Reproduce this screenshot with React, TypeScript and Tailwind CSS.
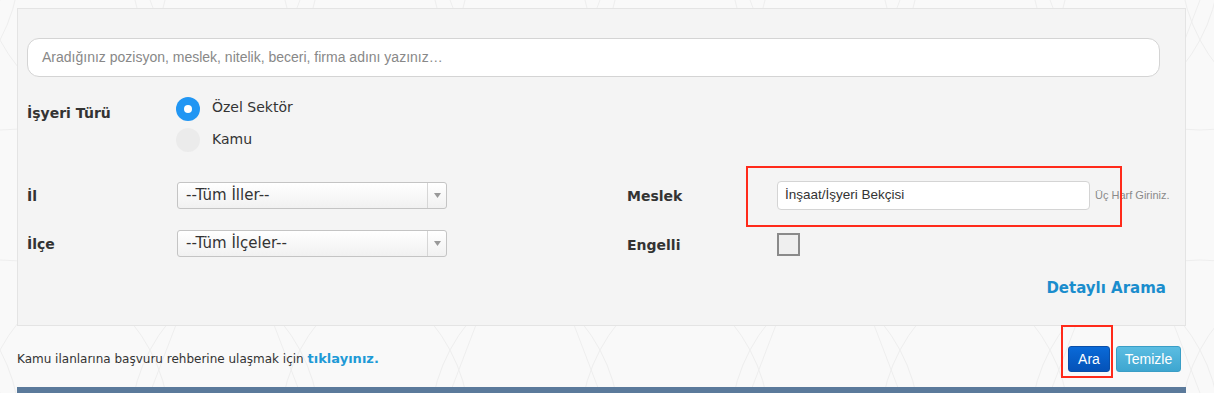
import React from "react";

const verdana = "font-['DejaVu_Sans',Verdana,sans-serif]";
const helv = "font-['Liberation_Sans',Arial,sans-serif]";

function Select({ value }: { value: string }) {
  return (
    <div className="flex h-[27px] w-[270px] shrink-0 items-stretch overflow-hidden rounded-[3px] border border-[#c4c4c4] bg-gradient-to-b from-white to-[#f1f1f1]">
      <div className={`flex flex-1 items-center pl-[8px] text-[15px] leading-none text-[#333] ${verdana}`}>{value}</div>
      <div className="flex w-[19px] items-center justify-center border-l border-[#d6d6d6]">
        <svg width="7" height="5" viewBox="0 0 7 5">
          <path d="M0 0h7L3.5 5z" fill="#999" />
        </svg>
      </div>
    </div>
  );
}

function Pattern() {
  const xs = [-150, 150, 450, 750, 1050, 1350];
  return (
    <svg className="absolute inset-0" width="1214" height="393">
      <g fill="none" stroke="#eeeeee" strokeWidth="1">
        {xs.map((x) => (
          <g key={x}>
            <circle cx={x} cy={-40} r={170} />
            <circle cx={x + 150} cy={-40} r={170} />
            <circle cx={x} cy={430} r={170} />
            <circle cx={x + 150} cy={430} r={170} />
            <path d={`M${x} 0 L${x + 150} 393 M${x + 150} 0 L${x} 393`} />
          </g>
        ))}
      </g>
    </svg>
  );
}

export default function App() {
  return (
    <div className="relative h-[393px] w-[1214px] overflow-hidden bg-[#f9f9f9]">
      <Pattern />
      <div className="relative w-[1186px] pl-[17px] pt-[8px]">
        <div className="flex h-[318px] w-[1169px] flex-col border border-[#e4e4e4] bg-[#f4f4f4] pl-[9px] pr-[19px] pt-[29px]">
          <div className={`flex h-[39px] w-[1133px] items-center rounded-[12px] border border-[#d4d4d4] bg-white pl-[14px] text-[14px] text-[#888] ${helv}`}>
            Aradığınız pozisyon, meslek, nitelik, beceri, firma adını yazınız…
          </div>

          <div className="mt-[20px] flex">
            <div className={`w-[149px] pt-[6px] text-[14px] font-bold text-[#333] ${verdana}`}>İşyeri Türü</div>
            <div className="flex flex-col gap-[7px]">
              <div className="flex items-center gap-[12px]">
                <span className="flex h-[24px] w-[24px] items-center justify-center rounded-full bg-[#2196f3]">
                  <span className="h-[8px] w-[8px] rounded-full bg-white" />
                </span>
                <span className={`-mt-[3px] text-[14px] text-[#333] ${verdana}`}>Özel Sektör</span>
              </div>
              <div className="flex items-center gap-[12px]">
                <span className="h-[24px] w-[24px] rounded-full bg-[#ebebeb]" />
                <span className={`-mt-[2px] text-[14px] text-[#333] ${verdana}`}>Kamu</span>
              </div>
            </div>
          </div>

          <div className="mt-[29px] grid grid-cols-[600px_1fr] grid-rows-[29px_29px] gap-y-[19px]">
            <div className="flex items-center">
              <div className={`w-[150px] pt-[2px] text-[14px] font-bold text-[#333] ${verdana}`}>İl</div>
              <Select value="--Tüm İller--" />
            </div>
            <div className="relative flex items-center">
              <div className={`w-[150px] pt-[2px] text-[14px] font-bold text-[#333] ${verdana}`}>Meslek</div>
              <div className={`flex h-[29px] w-[313px] shrink-0 items-center rounded-[4px] border border-[#d4d4d4] bg-white pl-[7px] text-[13.5px] text-[#333] ${helv}`}>
                İnşaat/İşyeri Bekçisi
              </div>
              <span className={`ml-[5px] whitespace-nowrap text-[11px] text-[#8a8a8a] ${helv}`}>Üç Harf Giriniz.</span>
              <div className="absolute left-[119px] top-[-15px] h-[61px] w-[376px] border-[2px] border-[#ff2a1a]" />
            </div>
            <div className="flex items-center">
              <div className={`w-[150px] pt-[2px] text-[14px] font-bold text-[#333] ${verdana}`}>İlçe</div>
              <Select value="--Tüm İlçeler--" />
            </div>
            <div className="flex items-center">
              <div className={`w-[150px] pt-[4px] text-[14px] font-bold text-[#333] ${verdana}`}>Engelli</div>
              <span className="mt-[2px] h-[23px] w-[23px] border-[2px] border-[#8a8a8a] bg-[#efefef]" />
            </div>
          </div>

          <div className="mt-[19px] flex justify-end">
            <span className={`text-[15px] font-bold text-[#1a8dcd] ${verdana}`}>Detaylı Arama</span>
          </div>
        </div>

        <div className="mt-[20px] flex items-center justify-between">
          <div className={`text-[12px] text-[#333] ${verdana}`}>
            Kamu ilanlarına başvuru rehberine ulaşmak için{" "}
            <span className="text-[13px] font-bold text-[#1e9ad6]">tıklayınız.</span>
          </div>
          <div className="mr-[5px] flex gap-[6px]">
            <div className="relative">
              <div className={`flex h-[26px] w-[42px] items-center justify-center rounded-[3px] border border-[#0a4fa8] bg-gradient-to-b from-[#0a6ad8] to-[#0552b8] text-[14px] text-white ${helv}`}>
                Ara
              </div>
              <div className="absolute left-[-7px] top-[-21px] h-[53px] w-[52px] border-[2px] border-[#ff2a1a]" />
            </div>
            <div className={`flex h-[26px] w-[65px] items-center justify-center rounded-[3px] border border-[#3a9ec6] bg-gradient-to-b from-[#5bbde2] to-[#3ea6d0] text-[14px] text-white ${helv}`}>
              Temizle
            </div>
          </div>
        </div>

        <div className="mt-[15px] h-[8px] w-[1169px] bg-[#5b7a9b]" />
      </div>
    </div>
  );
}
